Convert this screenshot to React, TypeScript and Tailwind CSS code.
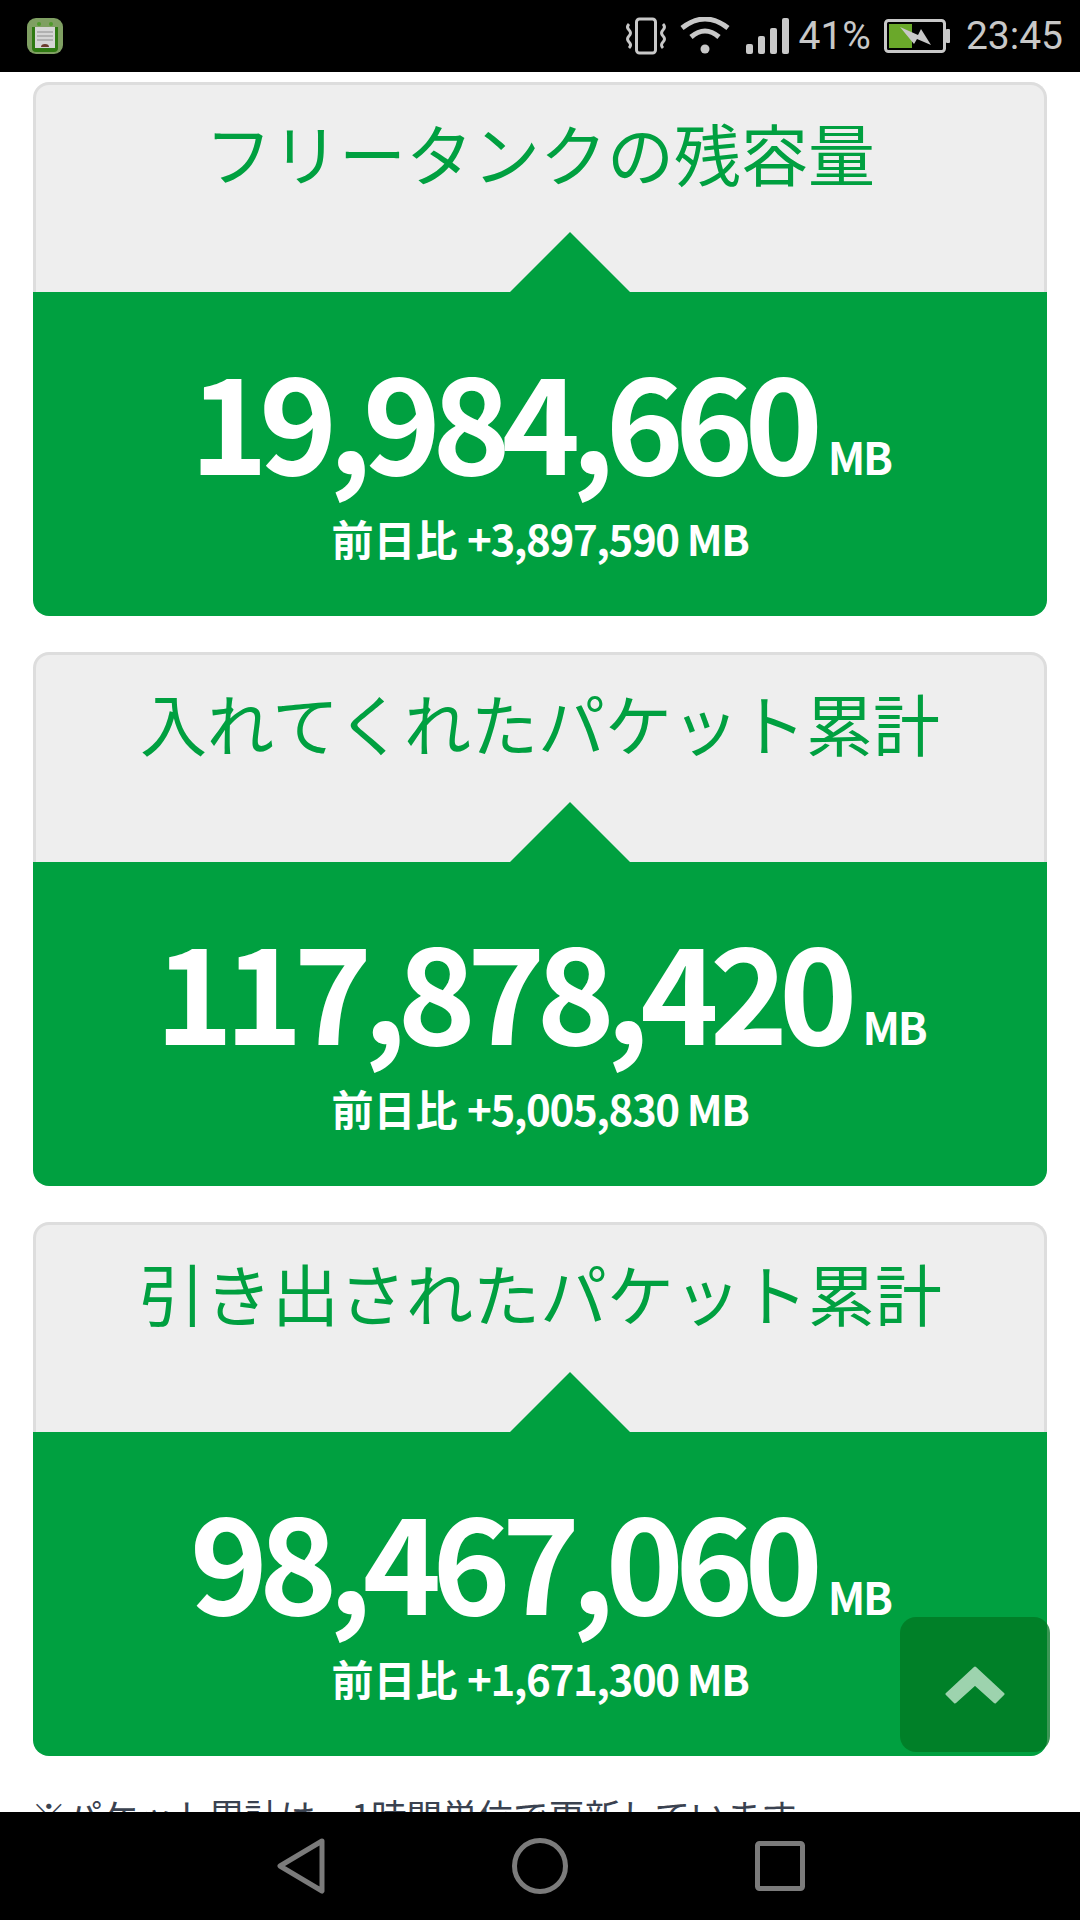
import React from 'react';

const CJK = "font-['Noto_Sans_CJK_JP',sans-serif]";

const StatCard = ({ title, value, diff }: { title: string; value: string; diff: string }) => (
  <section className="w-full mb-[36px]">
    <div className="relative h-[210px] bg-[#eeeeee] border-[3px] border-b-0 border-[#dddddd] rounded-t-[16px] text-center">
      <h2 className="pt-[20px] text-[67px] leading-[94px] font-normal text-[#00a040]">{title}</h2>
      <svg className="absolute left-[474px] bottom-0" width="120" height="60" viewBox="0 0 120 60">
        <path d="M0 60 L60 0 L120 60 Z" fill="#00a040" />
      </svg>
    </div>
    <div className="h-[324px] bg-[#00a040] rounded-b-[16px] text-white text-center font-bold">
      <p className="pt-[53px] flex items-baseline justify-center h-[216px]">
        <span className="text-[133px] leading-[144px] tracking-[-9px]">{value}</span>
        <span className="ml-[14px] text-[44px] leading-none tracking-[-2.5px]">MB</span>
      </p>
      <p className="text-[42px] leading-[60px]">
        前日比 <span className="tracking-[-1.4px]">{diff} MB</span>
      </p>
    </div>
  </section>
);

const StatusBar = () => (
  <header className="h-[72px] shrink-0 bg-black flex items-center justify-between pl-[27px] pr-[17px]">
    <svg width="36" height="36" viewBox="0 0 36 36">
      <rect width="36" height="36" rx="9" fill="#7f9f62" />
      <path d="M5 9 h26 v21 a4 4 0 0 1 -4 4 h-18 a4 4 0 0 1 -4 -4z" fill="#2f7a12" />
      <circle cx="12" cy="6" r="2" fill="#4f9a2b" />
      <circle cx="24" cy="6" r="2" fill="#4f9a2b" />
      <rect x="8" y="9" width="20" height="21" fill="#d5d5d5" />
      <path d="M10 14h16M10 18h16M10 22h16" stroke="#8d8d8d" strokeWidth="1" />
      <path d="M14 29 a4 3 0 0 1 8 0z" fill="#6b3d2e" />
    </svg>
    <div className="flex items-center text-[#c8c8c8] font-['Roboto',sans-serif]">
      <svg className="mr-[13px]" width="42" height="38" viewBox="0 0 42 38" fill="none" stroke="#c8c8c8">
        <rect x="11.5" y="2" width="19" height="34" rx="3" strokeWidth="3" />
        <path d="M4 7 q-3 3 0 6 q3 3 0 6 q-3 3 0 6 q3 3 0 6M38 7 q3 3 0 6 q-3 3 0 6 q3 3 0 6 q-3 3 0 6" strokeWidth="3" />
      </svg>
      <svg className="mr-[16px]" width="50" height="38" viewBox="0 0 50 38">
        <path d="M2 11 Q25 -7 48 11" fill="none" stroke="#c8c8c8" strokeWidth="5" />
        <path d="M11 20 Q25 8 39 20" fill="none" stroke="#c8c8c8" strokeWidth="5" />
        <circle cx="25" cy="32" r="4.5" fill="#c8c8c8" />
      </svg>
      <div className="flex items-end gap-[5px] h-[36px] mr-[9px]">
        <span className="w-[7px] h-[10px] bg-[#c8c8c8] rounded-[2px]" />
        <span className="w-[7px] h-[18px] bg-[#c8c8c8] rounded-[2px]" />
        <span className="w-[7px] h-[26px] bg-[#c8c8c8] rounded-[2px]" />
        <span className="w-[7px] h-[36px] bg-[#c8c8c8] rounded-[2px]" />
      </div>
      <span className="text-[39px] leading-none mr-[13px]">41%</span>
      <svg className="mr-[16px]" width="66" height="34" viewBox="0 0 66 34">
        <rect x="1.5" y="1.5" width="59" height="31" rx="3" fill="none" stroke="#c8c8c8" strokeWidth="3" />
        <rect x="5" y="5" width="23" height="24" fill="#6aa82a" />
        <rect x="62" y="10" width="4" height="14" rx="1" fill="#c8c8c8" />
        <path d="M16 8 L34 16 L37 10 L47 26 L33 20 L30 25 Z" fill="#c8c8c8" />
      </svg>
      <span className="text-[39px] leading-none">23:45</span>
    </div>
  </header>
);

const NavBar = () => (
  <nav className="h-[108px] shrink-0 bg-black flex items-center justify-center">
    <div className="flex items-center gap-[187px] ml-[1px]">
      <svg width="48" height="56" viewBox="0 0 48 56" fill="none" stroke="#7b7b7b" strokeWidth="5" strokeLinejoin="round">
        <path d="M45 3 L3 28 L45 53 Z" />
      </svg>
      <svg width="56" height="56" viewBox="0 0 56 56" fill="none" stroke="#7b7b7b" strokeWidth="5">
        <circle cx="28" cy="28" r="25.5" />
      </svg>
      <svg width="50" height="50" viewBox="0 0 50 50" fill="none" stroke="#7b7b7b" strokeWidth="5" strokeLinejoin="round">
        <rect x="2.5" y="2.5" width="45" height="45" rx="2" />
      </svg>
    </div>
  </nav>
);

export default function App() {
  return (
    <div className={`w-[1080px] h-[1920px] flex flex-col bg-white ${CJK}`}>
      <StatusBar />
      <main className="relative flex-1 overflow-hidden px-[33px] pt-[10px]">
        <StatCard title="フリータンクの残容量" value="19,984,660" diff="+3,897,590" />
        <StatCard title="入れてくれたパケット累計" value="117,878,420" diff="+5,005,830" />
        <StatCard title="引き出されたパケット累計" value="98,467,060" diff="+1,671,300" />
        <p className="text-[35.6px] leading-[48px] text-[#3a4250] -mt-[1px] -ml-[2px]">※パケット累計は、1時間単位で更新しています</p>
        {/* page-top button, see-through where it hangs past the card edge */}
        <button
          aria-label="ページトップへ"
          className="absolute left-[900px] top-[1545px] w-[150px] h-[135px] rounded-[16px] bg-[#007621]/[.76] flex items-center justify-center"
        >
          <svg width="60" height="38" viewBox="0 0 60 38" fill="#9dd3ae" stroke="#9dd3ae" strokeWidth="3" strokeLinejoin="round">
            <path d="M30 2 L58 28 L50 36 L30 18 L10 36 L2 28 Z" />
          </svg>
        </button>
      </main>
      <NavBar />
    </div>
  );
}
